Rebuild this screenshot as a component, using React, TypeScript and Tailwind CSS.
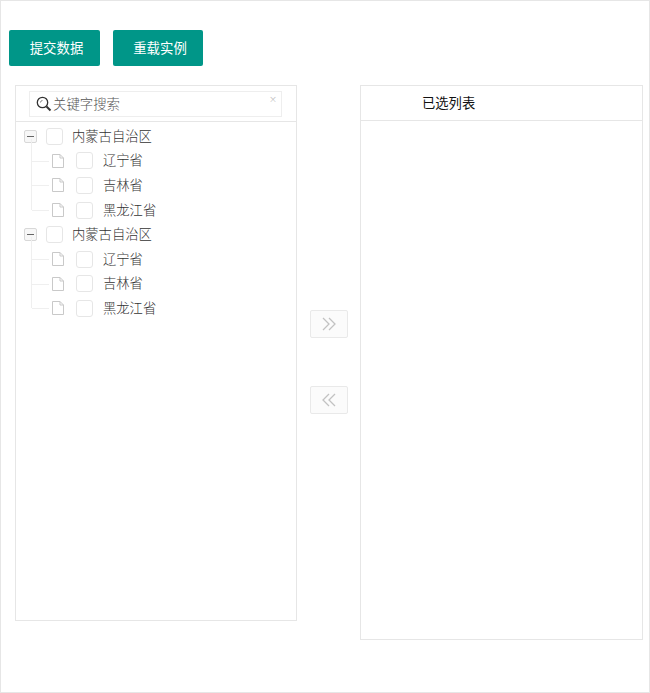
import { Fragment } from 'react';

const provinces = ['辽宁省', '吉林省', '黑龙江省'];
const groups = ['内蒙古自治区', '内蒙古自治区'];

function Checkbox() {
  return <span className="block w-[17px] h-[17px] border border-[#e6e6e6] rounded-[3px] bg-white shrink-0" />;
}

function FileIcon() {
  return (
    <svg width="14" height="16" viewBox="0 0 14 16" fill="none" stroke="#c9c9c9" strokeWidth="1" className="shrink-0">
      <path d="M1.5 1.5h7.5l3.5 3.5v9.5h-11z" />
      <path d="M9 1.5v3.5h3.5" />
    </svg>
  );
}

function CollapseIcon() {
  return (
    <span className="flex items-center justify-center w-[13px] h-[13px] border border-[#d8d8d8] rounded-[2px] bg-[#f7f7f7] shrink-0">
      <span className="block w-[7px] h-px bg-[#666]" />
    </span>
  );
}

function SearchIcon() {
  return (
    <svg width="16" height="16" viewBox="0 0 16 16" fill="none" className="shrink-0">
      <circle cx="6.5" cy="6.5" r="5.2" stroke="#333" strokeWidth="1.3" />
      <path d="M4.5 6.5a2 2 0 0 1 2-2" stroke="#888" strokeWidth="1" />
      <path d="M10.5 10.5l4 4" stroke="#333" strokeWidth="2" />
    </svg>
  );
}

function TreeGroup({ name }: { name: string }) {
  return (
    <Fragment>
      <div className="flex items-center h-[24.6px] pl-[8px]">
        <CollapseIcon />
        <span className="ml-[9px]"><Checkbox /></span>
        <span className="ml-[9px] -mt-px text-[13.3px] font-light text-[#333]">{name}</span>
      </div>
      {provinces.map((p, i) => (
        <div key={p} className="relative flex items-center h-[24.6px] pl-[35px]">
          <span className={`absolute left-[15px] top-[-10px] w-px bg-[#efefef] ${i === 2 ? 'h-[22px]' : 'h-[35px]'}`} />
          <span className="absolute left-[16px] top-[12px] w-[17px] h-px bg-[#efefef]" />
          <FileIcon />
          <span className="ml-[11px]"><Checkbox /></span>
          <span className="ml-[10px] -mt-px text-[13.3px] font-light text-[#333]">{p}</span>
        </div>
      ))}
    </Fragment>
  );
}

export default function App() {
  return (
    <div className="h-[693px] border border-[#e6e6e6] bg-white font-['Noto_Sans_CJK_SC','Liberation_Sans',sans-serif] overflow-hidden">
      <div className="flex gap-[13px] pl-2 pt-[29px]">
        <button className="w-[91px] h-[36px] pl-[4px] pb-[2px] bg-[#009688] text-white text-[13.4px] rounded-[2px]">提交数据</button>
        <button className="w-[90px] h-[36px] pl-[4px] pb-[2px] bg-[#009688] text-white text-[13.4px] rounded-[2px]">重载实例</button>
      </div>

      <div className="flex items-start pl-[14px] mt-[19px]">
        <div className="w-[282px] h-[536px] border border-[#e6e6e6] shrink-0">
          <div className="h-[36px] border-b border-[#e6e6e6] pl-[13px] pr-[14px] pt-[5px]">
            <div className="relative flex items-center h-[26px] border border-[#eee] pl-[6px]">
              <SearchIcon />
              <span className="ml-px -mt-[2px] text-[13.4px] font-light text-[#555]">关键字搜索</span>
              <span className="absolute right-[4px] top-[3px] text-[8px] leading-none text-[#bbb]">×</span>
            </div>
          </div>
          <div className="pt-[2px]">
            {groups.map((g, i) => (
              <TreeGroup key={i} name={g} />
            ))}
          </div>
        </div>

        <div className="w-[63px] shrink-0 flex flex-col items-center gap-[48px] pt-[225px]">
          <button className="flex items-center justify-center w-[38px] h-[28px] border border-[#e9e9e9] bg-[#fbfbfb] rounded-[2px]">
            <svg width="16" height="16" viewBox="0 0 16 16" fill="none" stroke="#c2c2c2" strokeWidth="1.3">
              <path d="M2 2l6 6-6 6M8 2l6 6-6 6" />
            </svg>
          </button>
          <button className="flex items-center justify-center w-[38px] h-[28px] border border-[#e9e9e9] bg-[#fbfbfb] rounded-[2px]">
            <svg width="16" height="16" viewBox="0 0 16 16" fill="none" stroke="#c2c2c2" strokeWidth="1.3">
              <path d="M14 2l-6 6 6 6M8 2l-6 6 6 6" />
            </svg>
          </button>
        </div>

        <div className="w-[283px] h-[555px] border border-[#e6e6e6] shrink-0">
          <div className="flex items-center h-[35px] pb-px border-b border-[#e6e6e6] pl-[61px] text-[13.3px] text-[#111]">已选列表</div>
        </div>
      </div>
    </div>
  );
}
